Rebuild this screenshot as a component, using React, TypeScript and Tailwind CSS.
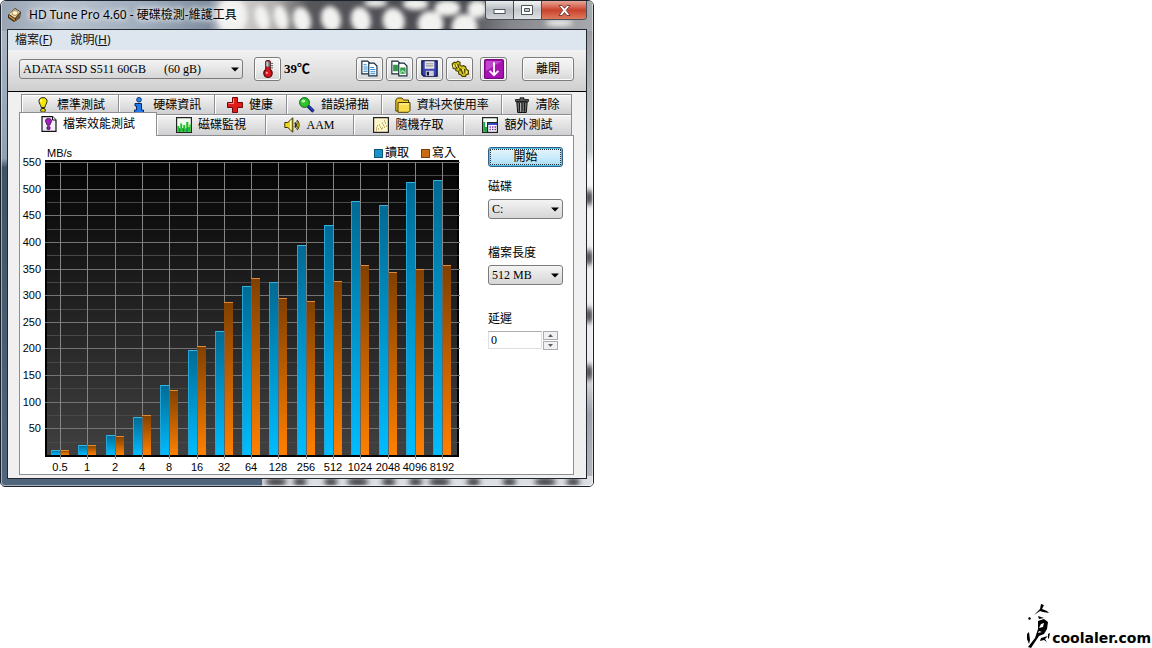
import { useState, type ReactNode } from 'react';
import clsx from 'clsx';

type Sample = { size: string; read: number; write: number };

const SAMPLES: Sample[] = [
  { size: '0.5', read: 10, write: 9 },
  { size: '1', read: 18, write: 18 },
  { size: '2', read: 37, write: 35 },
  { size: '4', read: 71, write: 76 },
  { size: '8', read: 131, write: 122 },
  { size: '16', read: 198, write: 205 },
  { size: '32', read: 232, write: 287 },
  { size: '64', read: 318, write: 332 },
  { size: '128', read: 324, write: 294 },
  { size: '256', read: 394, write: 289 },
  { size: '512', read: 431, write: 326 },
  { size: '1024', read: 476, write: 356 },
  { size: '2048', read: 469, write: 343 },
  { size: '4096', read: 513, write: 350 },
  { size: '8192', read: 516, write: 356 },
];

const SERIF = "font-['Liberation_Serif','Noto_Sans_CJK_TC',serif]";
const UI = "font-['Noto_Sans','Noto_Sans_CJK_TC',sans-serif]";

/* ---------- icons ---------- */

const Icon = ({ children, size = 16 }: { children: ReactNode; size?: number }) => (
  <svg width={size} height={size} viewBox="0 0 16 16" className="shrink-0" aria-hidden="true">
    {children}
  </svg>
);

const AppIcon = () => (
  <Icon>
    <path d="M1 8 8 1l6 4-1 6-6 4-6-4Z" fill="#3b3026" />
    <path d="m2 7 6-5 5 3-5 6Z" fill="#e8d9b8" />
    <ellipse cx="8" cy="6" rx="3" ry="2.4" fill="#fff6dc" stroke="#b88a3c" />
    <path d="m2 8 6 4v2l-6-4Z" fill="#c98a2b" />
    <path d="m9 11 4-5v4l-4 4Z" fill="#7a5a35" />
  </Icon>
);

const BulbIcon = () => (
  <Icon>
    <path d="M8 .6C5.200.6 3.700 2.400 4 4.600 4.200 6.500 5.800 8 6.200 10.500h3.600C10.200 8 11.800 6.500 12 4.600 12.300 2.400 10.800.6 8 .6Z" fill="#f4e800" stroke="#222" />
    <path d="M6.500 2.500 6 5" stroke="#fffde0" strokeWidth="1.400" />
    <ellipse cx="8" cy="13.300" rx="2.400" ry="2" fill="#e6d200" stroke="#222" />
  </Icon>
);

const InfoIcon = () => (
  <Icon>
    <circle cx="8" cy="2.800" r="2.300" fill="#2b8cff" stroke="#0a2a66" />
    <path d="M4 6.500h6.500v6.500h2v2.500h-9V13h2V9H4Z" fill="#1f7cf0" stroke="#0a2a66" />
  </Icon>
);

const CrossIcon = () => (
  <Icon>
    <path d="M5.500.500h5v5h5v5h-5v5h-5v-5h-5v-5h5Z" fill="#e01b1b" stroke="#6e0a0a" />
    <path d="M6.500 1.500v5h-5" stroke="#ff8a8a" fill="none" />
  </Icon>
);

const MagnifierIcon = () => (
  <Icon>
    <path d="m9 9 5.500 5.500" stroke="#111a66" strokeWidth="3.400" />
    <path d="m9.500 9 5 5" stroke="#2b45d8" strokeWidth="1.200" />
    <circle cx="5.500" cy="5.500" r="4.900" fill="#2fc42f" stroke="#0b5c17" />
    <ellipse cx="4.300" cy="4" rx="2" ry="1.500" fill="#b7f5a8" />
  </Icon>
);

const FolderIcon = () => (
  <Icon>
    <path d="M.8 14V3l1.700-2h4.500l1.500 2h5V14Z" fill="#f0c930" stroke="#4a3b00" />
    <path d="M3 15.300V5.500h12v8l-1.700 1.800Z" fill="#f8dc4c" stroke="#4a3b00" />
    <path d="M4.500 7h9" stroke="#fff6b0" />
  </Icon>
);

const TrashIcon = () => (
  <Icon>
    <path d="M6 .8h4v1.700h4.500v2h-13v-2H6Z" fill="#555" stroke="#111" strokeWidth=".8" />
    <path d="M2.800 5h10.400l-.9 10.500H3.700Z" fill="#6b6b6b" stroke="#111" />
    <path d="M5.500 6v8.500M8 6v8.500M10.500 6v8.500" stroke="#1b1b1b" />
    <path d="M6.500 6v8.500" stroke="#c5c5c5" strokeWidth=".8" />
  </Icon>
);

const FileBenchIcon = () => (
  <Icon>
    <path d="M1 .6h10.500L15 4v11.400H1Z" fill="#f4eefb" stroke="#111" strokeWidth="1.200" />
    <path d="M11.500.6V4H15" fill="#fff" stroke="#111" />
    <path d="M7.500 2.500c-2.200 0-3.200 1.200-3 2.700.2 1.500 1.400 2.300 1.800 4.100h2.400c.4-1.800 1.600-2.600 1.800-4.100.2-1.500-.8-2.700-3-2.700Z" fill="#a61cc0" stroke="#35063f" strokeWidth=".8" />
    <circle cx="7.500" cy="12" r="1.700" fill="#a61cc0" stroke="#35063f" strokeWidth=".8" />
  </Icon>
);

const MonitorIcon = () => (
  <Icon>
    <path d="M.6.6h14.800v14.800H.6Z" fill="#f2fff0" stroke="#222" strokeWidth="1.200" />
    <path d="M1.200 14.800V9h2v3h1V6.500h2V11h1V8h2v3.500h1V5h2.200v5h1V7.500h1.400v7.300Z" fill="#25c02d" />
    <path d="M3.200 14.800V11h1v3.800M7 14.800v-3h1v3M10.500 14.800V11h1v3.800" fill="#1c6f9c" />
  </Icon>
);

const SpeakerIcon = () => (
  <Icon>
    <path d="M.8 5.500h3L8.800.8v14.400l-5-4.700h-3Z" fill="#f0d81f" stroke="#3d3300" />
    <path d="M6.500 3.500v9" stroke="#fff8a8" />
    <path d="M11 5.500c1.200 1.500 1.200 3.500 0 5M12.800 3.500c2.500 2.300 2.500 6.700 0 9" stroke="#3d3300" fill="none" strokeWidth="2" />
    <path d="M12.800 3.800c2.200 2.300 2.200 6.100 0 8.400" stroke="#e0c81f" fill="none" strokeWidth=".8" />
  </Icon>
);

const ScatterIcon = () => (
  <Icon>
    <path d="M.6.6h14.800v14.800H.6Z" fill="#fff6cc" stroke="#222" strokeWidth="1.200" />
    <path d="M3 11h1M5 12h1M4 9h1M7 10h1M6 8h1M9 11h1M11 10h1M10 8h1M12 6h1M11 4h1M8 12h1M13 9h1M3 13h1M9 6h1" stroke="#8a7420" />
  </Icon>
);

const ExtraIcon = () => (
  <Icon>
    <path d="M.6.6h14.800v14.800H.6Z" fill="#f4fff8" stroke="#222" strokeWidth="1.200" />
    <path d="M1.200 14.800V5h2v5h2v4.800Z" fill="#1ea548" />
    <path d="M5.600 5.600h9.800v9.800H5.600Z" fill="#fff" stroke="#222" strokeWidth="1.200" />
    <path d="M6 6h9v2H6Z" fill="#3846c8" />
    <path d="M7.500 10h1.500M10 10h1.500M12.500 10H14M7.500 12.500H9M10 12.500h1.500M12.500 12.500H14" stroke="#7b2fb5" strokeWidth="1.300" />
  </Icon>
);

const ThermometerIcon = () => (
  <Icon size={18}>
    <path d="M6 1.500c0-1.300 4-1.300 4 0V8.500c3.300 2.500 1.500 7-2 7s-5.300-4.500-2-7Z" fill="#d8141c" stroke="#4b1014" />
    <path d="M6.600 1.300h2.800V6H6.600Z" fill="#6f9298" />
    <path d="M7.200 1.500v4" stroke="#dff0f0" />
    <path d="M10.500 3h2M10.500 5h2M10.500 7h2" stroke="#555" strokeWidth=".8" />
    <circle cx="7" cy="11.500" r="1" fill="#ff9a9a" />
  </Icon>
);

const CopyIcon = ({ image }: { image?: boolean }) => (
  <Icon size={17}>
    <path d="M.8 1h5.500L8.500 3.200v9.800H.8Z" fill="#fff" stroke="#182c3c" strokeWidth="1.100" />
    <path d="M7.300 3h5L15 5.700V15H7.300Z" fill="#fff" stroke="#182c3c" strokeWidth="1.100" />
    {image ? (
      <>
        <path d="M2 4.500h4.500v6H2Z" fill="#2c9a45" />
        <path d="M8.700 7h5v6h-5Z" fill="#2c9a45" />
        <path d="m9 12 2-2 2 2" stroke="#a8edb0" fill="none" />
      </>
    ) : (
      <path d="M2.300 4.500h3M2.300 6.500h4M2.300 8.500h4M2.300 10.500h4M8.800 7h3.500M8.800 9h4.700M8.800 11h4.700M8.800 13h4.700" stroke="#2a8bd8" />
    )}
  </Icon>
);

const FloppyIcon = () => (
  <Icon size={17}>
    <path d="M.8.8h14.400v14.400H2.500L.8 13.500Z" fill="#3a44b0" stroke="#0c1040" strokeWidth="1.200" />
    <path d="M3.500 1.200h9v7h-9Z" fill="#e4e4e4" />
    <path d="M4.500 3.500h7M4.500 5.500h7" stroke="#999" />
    <path d="M4.500 10h7.500v5H4.500Z" fill="#cfcfd6" />
    <path d="M5.500 11h2v3.500h-2Z" fill="#0c1040" />
  </Icon>
);

const ChainIcon = () => (
  <Icon size={18}>
    <path d="M1 3.500 3 2l1.500.5L6 1l2 1v2.500l1.500 1L11 5l2 1 .5 2 2 1.500v3l-2 .5-.5 1.500h-3L8.500 13 7 12.500l-.5-2.500-2-.5-.5-1.500-2-.5-.5-2Z" fill="#d6c51c" stroke="#4b4200" />
    <path d="m3.500 4 2 4M6 3.500l1 3.500M9 8l1.500 4.500M12 8l.5 4M8 7v3" stroke="#4b4200" strokeWidth="1.100" />
    <path d="M2.500 4.500v2M4.700 4v2M10.700 8v2M13.500 10v2" stroke="#fff58c" />
  </Icon>
);

const DownloadIcon = () => (
  <Icon size={20}>
    <rect x=".5" y=".5" width="15" height="15" rx="1" fill="#a814b2" stroke="#7d0787" />
    <path d="M1.500 1.500h13l-13 8Z" fill="#c445ce" />
    <path d="M8 2.500v10.500M4.500 9.500 8 13l3.500-3.500" stroke="#fff" strokeWidth="1.500" fill="none" />
  </Icon>
);

/* ---------- window chrome ---------- */

const TITLE_PEBBLES = [
  { x: 262, y: 17, rx: 7 },
  { x: 281, y: 17, rx: 7 },
  { x: 302, y: 19, rx: 9 },
  { x: 331, y: 18, rx: 10 },
  { x: 361, y: 19, rx: 10 },
  { x: 394, y: 20, rx: 11 },
  { x: 431, y: 23, rx: 13 },
  { x: 465, y: 26, rx: 13 },
];

// Desktop picture shining through the glass border
const GlassBackdrop = () => (
  <svg className="absolute inset-0 h-full w-full" viewBox="0 0 594 486" preserveAspectRatio="none" aria-hidden="true">
    <defs>
      <filter id="soft" x="-20%" y="-20%" width="140%" height="140%">
        <feGaussianBlur stdDeviation="2.500" />
      </filter>
      <linearGradient id="titleTint">
        <stop offset="0" stopColor="#98a4b3" />
        <stop offset=".1" stopColor="#b9c3cf" />
        <stop offset=".25" stopColor="#9dabbb" />
        <stop offset=".35" stopColor="#7f8d9f" />
        <stop offset=".38" stopColor="#dcdcdc" />
        <stop offset=".46" stopColor="#b4b2b0" />
        <stop offset=".52" stopColor="#55555a" />
        <stop offset=".78" stopColor="#4a4a50" />
        <stop offset=".86" stopColor="#85878c" />
        <stop offset="1" stopColor="#a6a9ae" />
      </linearGradient>
      <linearGradient id="leftTint" x2="0" y2="1">
        <stop offset="0" stopColor="#a9b4c2" />
        <stop offset=".28" stopColor="#8fa0b3" />
        <stop offset=".3" stopColor="#3f5368" />
        <stop offset="1" stopColor="#51667d" />
      </linearGradient>
      <linearGradient id="rightTint" x2="0" y2="1">
        <stop offset="0" stopColor="#9a9ca2" />
        <stop offset=".12" stopColor="#b2b4ba" />
        <stop offset=".27" stopColor="#c8cacd" />
        <stop offset=".3" stopColor="#f6f6f6" />
        <stop offset=".76" stopColor="#ececee" />
        <stop offset=".86" stopColor="#a0a1aa" />
        <stop offset="1" stopColor="#b4b5bc" />
      </linearGradient>
    </defs>
    <rect width="594" height="486" fill="#dcdfe3" />
    <rect width="594" height="30" fill="url(#titleTint)" />
    <rect y="30" width="10" height="456" fill="url(#leftTint)" />
    <rect x="584" y="30" width="10" height="446" fill="url(#rightTint)" />
    <rect y="476" width="262" height="10" fill="#50667d" />
    <g filter="url(#soft)" fill="#f2f2f0">
      <ellipse cx="232" cy="15" rx="15" ry="18" />
      {TITLE_PEBBLES.map(({ x, y, rx }) => (
        <ellipse key={x} cx={x} cy={y} rx={rx} ry="13" transform={`rotate(-14 ${x} ${y})`} />
      ))}
      <ellipse cx="376" cy="2" rx="12" ry="4" />
      <ellipse cx="416" cy="3" rx="13" ry="6" />
      <ellipse cx="448" cy="7" rx="13" ry="8" />
      <ellipse cx="478" cy="8" rx="10" ry="9" />
      <ellipse cx="560" cy="22" rx="14" ry="3" />
    </g>
    <g filter="url(#soft)" fill="#3f3f45">
      {[276, 300, 331, 358, 389, 416, 440, 474, 510, 546, 574].map((x, i) => (
        <ellipse key={x} cx={x} cy="482" rx={i % 3 ? 7 : 11} ry="4" />
      ))}
      {[197, 257, 315, 372].map((y) => (
        <ellipse key={y} cx="590" cy={y} rx="4" ry="8" />
      ))}
    </g>
  </svg>
);

const CaptionButtons = () => (
  <div className="flex h-[19px] overflow-hidden rounded-b border border-t-0 border-[#4a4f57]">
    <button aria-label="Minimize" className="flex w-7 items-center justify-center border-r border-[#4a4f57] bg-linear-to-b from-[#e8eaec] via-[#b5bac0] to-[#d0d4d8]">
      <svg width="13" height="10" viewBox="0 0 13 10"><rect x="1" y="4.500" width="11" height="4" fill="#fff" stroke="#50555c" /></svg>
    </button>
    <button aria-label="Maximize" className="flex w-7 items-center justify-center border-r border-[#4a4f57] bg-linear-to-b from-[#f4f5f6] via-[#c4c8cc] to-[#e0e3e6]">
      <svg width="13" height="11" viewBox="0 0 13 11">
        <path d="M.5.500h11v9H.5Z" fill="#fff" stroke="#50555c" />
        <path d="M3.500 3.500h5v3h-5Z" fill="#c4c8cc" stroke="#50555c" />
      </svg>
    </button>
    <button aria-label="Close" className="flex w-11 items-center justify-center bg-linear-to-b from-[#e6a697] via-[#c9402c] to-[#dd7a5c]">
      <svg width="13" height="11" viewBox="0 0 13 11">
        <path d="M1 .5h3l2.500 2.800L9 .5h3L8.300 5.300 12 10.500H9L6.500 7.500 4 10.500H1l3.700-5.200Z" fill="#fff" stroke="#5d2a2a" strokeWidth=".8" />
      </svg>
    </button>
  </div>
);

const MenuBar = () => (
  <nav className={clsx('flex h-5 items-center gap-[18px] bg-[#dde5ee] px-[7px] text-xs text-[#111]', UI)}>
    <button className="leading-4">檔案(<u>F</u>)</button>
    <button className="leading-4">說明(<u>H</u>)</button>
  </nav>
);

const BUTTON = 'flex items-center justify-center rounded-[3px] border border-[#7c7c7c] bg-linear-to-b from-[#f5f5f5] via-[#ebebeb] to-[#d6d6d6] shadow-[inset_0_0_0_1px_#fbfbfb]';

const ToolButton = ({ label, children }: { label: string; children: ReactNode }) => (
  <button aria-label={label} className={clsx(BUTTON, 'h-6 w-[27px] shrink-0')}>{children}</button>
);

type DropDownProps = { id: string; options: string[]; className?: string; label?: string };

const DropDown = ({ id, options, className, label }: DropDownProps) => (
  <div className={clsx('relative', className)}>
    <select
      id={id}
      aria-label={label}
      className={clsx('block h-5 w-full appearance-none rounded-[3px] border border-[#7c7c7c] bg-linear-to-b from-[#f4f4f4] to-[#d6d6d6] pl-[3px] text-xs leading-4 text-black', SERIF)}
    >
      {options.map((option) => <option key={option}>{option}</option>)}
    </select>
    <svg className="pointer-events-none absolute top-2 right-1" width="8" height="5" viewBox="0 0 8 5" aria-hidden="true">
      <path d="M0 .5h8l-4 4Z" fill="#000" />
    </svg>
  </div>
);

const Toolbar = () => (
  <div className="flex h-[42px] items-center border-b border-black bg-linear-to-b from-[#f3f3f3] to-[#cfcfcf] pr-3 pb-1 pl-[11px]">
    <DropDown id="drive-model" label="Drive" className="w-56" options={['ADATA SSD S511 60GB\u00a0\u00a0\u00a0\u00a0\u00a0\u00a0(60 gB)']} />
    <div className="ml-[11px] flex items-center gap-[3px]">
      <ToolButton label="Temperature"><ThermometerIcon /></ToolButton>
      <span className={clsx('text-[13px] font-bold', SERIF)}>39℃</span>
    </div>
    <div className="ml-auto flex items-center gap-[3px]">
      <ToolButton label="Copy text"><CopyIcon /></ToolButton>
      <ToolButton label="Copy screenshot"><CopyIcon image /></ToolButton>
      <ToolButton label="Save"><FloppyIcon /></ToolButton>
      <ToolButton label="Options"><ChainIcon /></ToolButton>
    </div>
    <div className="ml-[7px] flex items-center gap-[15px]">
      <ToolButton label="Minimize to tray"><DownloadIcon /></ToolButton>
      <button className={clsx(BUTTON, 'h-6 w-[52px] text-xs', SERIF)}>離開</button>
    </div>
  </div>
);

/* ---------- tabs ---------- */

const BACK_TABS = [
  { name: '標準測試', icon: <BulbIcon /> },
  { name: '硬碟資訊', icon: <InfoIcon /> },
  { name: '健康', icon: <CrossIcon /> },
  { name: '錯誤掃描', icon: <MagnifierIcon /> },
  { name: '資料夾使用率', icon: <FolderIcon /> },
  { name: '清除', icon: <TrashIcon /> },
];

const FRONT_TABS = [
  { name: '檔案效能測試', icon: <FileBenchIcon /> },
  { name: '磁碟監視', icon: <MonitorIcon /> },
  { name: 'AAM', icon: <SpeakerIcon /> },
  { name: '隨機存取', icon: <ScatterIcon /> },
  { name: '額外測試', icon: <ExtraIcon /> },
];

const TAB = 'flex items-center justify-center gap-1.5 border-[#8c8e92] text-xs leading-4 whitespace-nowrap text-black';
const TAB_IDLE = 'border-r bg-linear-to-b from-[#f4f4f4] to-[#d0d0d2] shadow-[inset_1px_1px_0_#fff]';

const Tabs = () => (
  <div role="tablist" className={SERIF}>
    <div className="mx-0.5 grid h-5 grid-cols-[97fr_96fr_72fr_96fr_120fr_70fr] border-t border-l border-[#8c8e92]">
      {BACK_TABS.map((tab) => (
        <button key={tab.name} role="tab" aria-selected="false" className={clsx(TAB, TAB_IDLE)}>
          {tab.icon}
          {tab.name}
        </button>
      ))}
    </div>
    <div className="relative -mt-0.5 -mb-px mr-0.5 grid h-6 grid-cols-[138fr_109fr_88fr_110fr_108fr] items-end">
      {FRONT_TABS.map((tab, i) => (
        <button
          key={tab.name}
          role="tab"
          aria-selected={i === 0}
          className={clsx(TAB, i === 0 ? 'h-6 border-t border-r border-l bg-white pb-0.5' : [TAB_IDLE, 'h-[22px] border-t border-b'])}
        >
          {tab.icon}
          {tab.name}
        </button>
      ))}
    </div>
  </div>
);

/* ---------- chart ---------- */

const MAX = 550;
const PLOT = { left: 25, right: 438, top: 3, bottom: 296 };

const yOf = (value: number) => Math.round(PLOT.bottom - (value / MAX) * (PLOT.bottom - PLOT.top));
const xOf = (index: number) => Math.round(40 + index * 27.3);

const LegendItem = ({ color, children }: { color: string; children: ReactNode }) => (
  <span className="flex items-center gap-0.5">
    <i className={clsx('size-[9px] border border-black/40', color)} />
    {children}
  </span>
);

const BenchmarkChart = () => {
  const majors = Array.from({ length: 11 }, (_, i) => (i + 1) * 50);

  return (
    <figure className="min-w-0 flex-1">
      <figcaption className="flex h-3 items-center justify-between pr-1 pl-[27px] text-xs leading-3">
        <span className="font-['Liberation_Sans',sans-serif] text-[11px]">MB/s</span>
        <span className={clsx('flex gap-3', SERIF)}>
          <LegendItem color="bg-[#1593c6]">讀取</LegendItem>
          <LegendItem color="bg-[#c86a10]">寫入</LegendItem>
        </span>
      </figcaption>
      <svg viewBox="0 0 440 315" className="block w-full overflow-visible font-['Liberation_Sans',sans-serif] text-[11px]" role="img" aria-label="MB/s">
        <defs>
          <linearGradient id="plot" x2="0" y2="1">
            <stop offset="0" stopColor="#040404" />
            <stop offset="1" stopColor="#404040" />
          </linearGradient>
          <linearGradient id="read" x2="0" y2="1">
            <stop offset="0" stopColor="#006a94" />
            <stop offset="1" stopColor="#00bcff" />
          </linearGradient>
          <linearGradient id="write" x2="0" y2="1">
            <stop offset="0" stopColor="#804000" />
            <stop offset="1" stopColor="#ff8000" />
          </linearGradient>
        </defs>

        <rect x={PLOT.left} y="1" width={PLOT.right - PLOT.left + 1} height="297" fill="#000" />
        <rect x={PLOT.left + 2} y={PLOT.top} width={PLOT.right - PLOT.left - 3} height={PLOT.bottom - PLOT.top} fill="url(#plot)" />

        <g shapeRendering="crispEdges">
          {majors.map((value) => (
            <g key={value}>
              <rect x={PLOT.left} y={yOf(value)} width="415" height="1" fill="#747474" />
              <rect x={PLOT.left + 2} y={yOf(value - 25)} width="412" height="1" fill="#484848" />
            </g>
          ))}
          {SAMPLES.map((sample, i) => (
            <rect key={sample.size} x={xOf(i)} y={PLOT.top} width="1" height={300 - PLOT.top} fill="#858585" />
          ))}
          {SAMPLES.map((sample, i) => {
            const x = xOf(i);
            const readY = yOf(sample.read);
            const writeY = yOf(sample.write);
            return (
              <g key={sample.size}>
                <rect x={x - 9} y={readY} width="9" height={PLOT.bottom - readY} fill="url(#read)" />
                <rect x={x - 9} y={readY} width="9" height="1" fill="#35b4e2" />
                <rect x={x - 9} y={readY} width="1" height={PLOT.bottom - readY} fill="#22a6d8" />
                <rect x={x} y={writeY} width="9" height={PLOT.bottom - writeY} fill="url(#write)" />
                <rect x={x} y={writeY} width="9" height="1" fill="#e08a35" />
                <rect x={x} y={Math.max(readY, writeY)} width="1" height={PLOT.bottom - Math.max(readY, writeY)} fill="#6b6458" />
              </g>
            );
          })}
        </g>

        {majors.map((value) => (
          <text key={value} x="21" y={yOf(value) + 4} textAnchor="end">{value}</text>
        ))}
        {SAMPLES.map((sample, i) => (
          <text key={sample.size} x={xOf(i)} y="312" textAnchor="middle">{sample.size}</text>
        ))}
      </svg>
    </figure>
  );
};

/* ---------- settings ---------- */

const SpinButton = ({ label, path, onClick }: { label: string; path: string; onClick: () => void }) => (
  <button aria-label={label} onClick={onClick} className="flex h-[9px] w-[15px] items-center justify-center border border-[#a9abb0] bg-[#f1f1f1]">
    <svg width="5" height="3" viewBox="0 0 5 3"><path d={path} fill="#56606e" /></svg>
  </button>
);

const Settings = () => {
  const [delay, setDelay] = useState(0);

  return (
    <div className={clsx('flex w-[75px] shrink-0 flex-col text-xs leading-4', SERIF)}>
      <button className="h-5 rounded-[3px] border border-[#2c628b] bg-linear-to-b from-[#e6f5fc] via-[#cdebfa] to-[#a6dcf5] p-px shadow-[inset_0_0_0_1px_#4cc4ee]">
        <span className="flex h-full items-center justify-center border border-dotted border-[#333]">開始</span>
      </button>
      <label htmlFor="drive" className="mt-3 mb-1">磁碟</label>
      <DropDown id="drive" options={['C:', 'D:']} />
      <label htmlFor="length" className="mt-[26px] mb-1">檔案長度</label>
      <DropDown id="length" options={['512 MB', '256 MB', '128 MB']} />
      <label htmlFor="delay" className="mt-[26px] mb-1">延遲</label>
      <div className="flex gap-px">
        <input
          id="delay"
          value={delay}
          onChange={(e) => setDelay(Number(e.target.value) || 0)}
          className="h-[18px] w-[54px] border border-[#dcdfe4] border-t-[#abadb3] bg-white pl-0.5"
        />
        <div className="flex flex-col gap-px">
          <SpinButton label="Increase" path="M0 3h5L2.500 0Z" onClick={() => setDelay(delay + 1)} />
          <SpinButton label="Decrease" path="M0 0h5L2.500 3Z" onClick={() => setDelay(Math.max(0, delay - 1))} />
        </div>
      </div>
    </div>
  );
};

/* ---------- site mark ---------- */

const SiteMark = () => (
  <a href="#" className="ml-auto flex items-end text-black">
    <svg width="26" height="46" viewBox="0 0 26 46" aria-hidden="true">
      <path d="M2 16 4 15l1 2-2 1ZM1 32l2-2 1 8-1 4-2-5Z" />
      <path d="M15 2l3 1-2 4 5 2 2 2-6-1-3-1-6 4 6-6Z" />
      <path d="M12 14l6 2-5 1ZM12 19l6-2 4 3-1 7-3 5-5 2-4 6-4 6-3-1 7-9 3-9Zm3 3-2 4 4-1 1-4Zm-2 7-1 2 4-1Z" fillRule="evenodd" />
      <path d="M15 36l7-2-3 3 2 3-3-2-4 1ZM22 32l2-1-1 5-1 1Z" />
    </svg>
    <span className="pr-px font-['DejaVu_Sans',sans-serif] text-sm leading-5 font-bold">coolaler.com</span>
  </a>
);

export default function App() {
  return (
    <main className="flex min-h-screen flex-col justify-between bg-white">
      <section className="relative w-full max-w-[594px] overflow-hidden rounded-t-md rounded-b-[5px] border border-[#1b222b]">
        <GlassBackdrop />
        <div className="relative rounded-b-[4px] border-x border-b border-white/50 px-[5px] pb-1.5">
          <header className="flex h-7 items-start justify-between">
            <div className={clsx('flex h-7 items-center gap-1.5 text-xs text-black', UI)}>
              <AppIcon />
              <h1 className="[text-shadow:0_0_6px_#fff,0_0_6px_#fff]">HD Tune Pro 4.60 - 硬碟檢測-維護工具</h1>
            </div>
            <CaptionButtons />
          </header>
          <div className="border border-[#22272e] bg-[#f0f0f0]">
            <MenuBar />
            <Toolbar />
            <div className="px-3 pt-0.5 pb-[3px] pl-[11px]">
              <Tabs />
              <div className="flex items-start gap-7 border border-[#8c8e92] bg-white pt-[11px] pr-2.5">
                <BenchmarkChart />
                <Settings />
              </div>
            </div>
          </div>
        </div>
      </section>
      <SiteMark />
    </main>
  );
}
